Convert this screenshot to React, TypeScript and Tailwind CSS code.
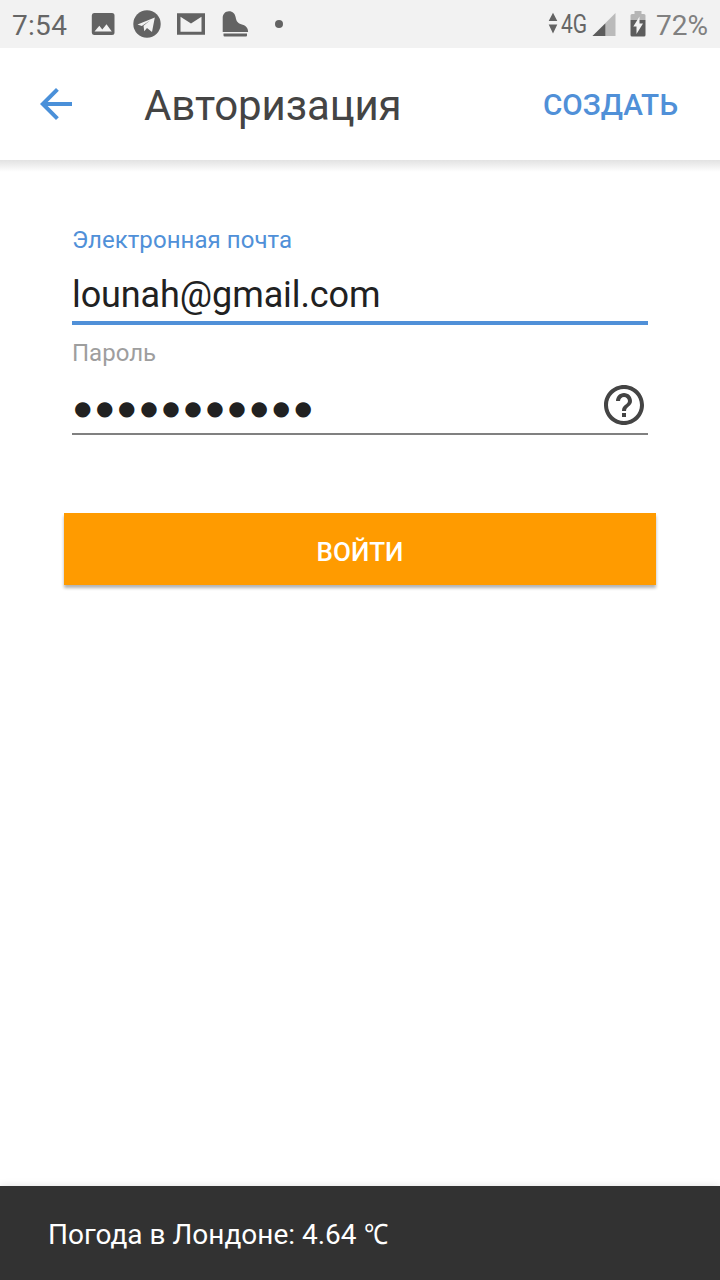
import React from "react";

function StatusBar() {
  return (
    <div className="flex h-12 shrink-0 items-center bg-[#f2f2f2] text-[#666666]">
      <span className="ml-3 mt-[3px] w-[79px] text-[28px] leading-8 tracking-[0.3px]">7:54</span>
      <svg className="h-6 w-6 shrink-0" viewBox="0 0 24 24" fill="#636363">
        <path fillRule="evenodd" d="M3 1h18a2.500 2.500 0 0 1 2.500 2.500v17a2.500 2.500 0 0 1-2.500 2.500H3A2.500 2.500 0 0 1 .8 20.500v-17A2.500 2.500 0 0 1 3 1ZM3.500 19.500h17.300L15.500 12.200l-4.200 5.300-3-3.700Z" />
      </svg>
      <svg className="ml-[18px] h-7 w-7 shrink-0" viewBox="0 0 28 28">
        <circle cx="14" cy="14" r="13.700" fill="#636363" />
        <path fill="#f2f2f2" d="M4.500 14.500 21.800 7.500 19 22l-5-3.900-2.700 3.100-.8-5.400 6.800-5.600-8.500 5.700Z" />
      </svg>
      <svg className="ml-4 h-6 w-7 shrink-0" viewBox="0 0 28 24">
        <path fill="#636363" fillRule="evenodd" d="M0 1.300h28v21.500H0ZM3.500 4.800v15h21v-15L14 11.500Z" />
      </svg>
      <svg className="ml-4 h-7 w-8 shrink-0" viewBox="0 0 32 28" fill="#636363">
        <path d="M1.700 22V8C1.700 4 4.200 1.200 8 1.200s6 2.500 6.600 5.900c.7 4.400 2.100 6.200 5.500 7.100 4.600 1.200 7 3.300 7 7.800Z" />
        <path d="M2.500 23.400h23.500v2.200a1 1 0 0 1-1 1h-21.500a1 1 0 0 1-1-1Z" />
      </svg>
      <span className="ml-[22px] h-2 w-2 rounded-full bg-[#636363]" />
      <svg className="-mt-[3px] ml-[265px] h-[22px] w-[10px] shrink-0" viewBox="0 0 10 22" fill="#636363">
        <path d="M5 .8 9.300 9H.7ZM.7 12.500h8.600L5 21.500Z" />
      </svg>
      <span className="ml-[3px] mt-[2px] w-[31px] origin-left scale-x-[0.84] text-[25px] leading-8 whitespace-nowrap">4G</span>
      <svg className="h-6 w-6 shrink-0" viewBox="0 0 24 24">
        <path fill="#bababa" d="M23.500 1v23H.5Z" />
        <path fill="#5c5c5c" d="M13.300 11.400v12.600H.5Z" />
      </svg>
      <svg className="ml-[14px] h-7 w-4 shrink-0" viewBox="0 0 16 28">
        <path fill="#b5b5b5" d="M4.500 1h7v3H14a1.500 1.500 0 0 1 1.500 1.500V10H.5V5.500A1.500 1.500 0 0 1 2 4h2.500Z" />
        <path fill="#5c5c5c" d="M.5 10h15v15a1.500 1.500 0 0 1-1.500 1.500H2A1.500 1.500 0 0 1 .5 25Z" />
        <path fill="#f2f2f2" d="M9.500 6.500v7H13L6.500 24v-7.500H3.300Z" />
      </svg>
      <span className="ml-[10px] mt-[3px] text-[28px] leading-8 text-[#808080]">72%</span>
    </div>
  );
}

function Header() {
  return (
    <header className="flex h-28 shrink-0 items-center bg-white">
      <svg className="ml-8 h-12 w-12 shrink-0" viewBox="0 0 24 24" fill="#4a90d9">
        <path d="M20 11H7.830l5.590-5.590L12 4l-8 8 8 8 1.410-1.410L7.830 13H20v-2z" />
      </svg>
      <h1 className="ml-16 mt-[3px] flex-1 text-[42px] leading-[48px] tracking-[-0.1px] text-[#444444]">Авторизация</h1>
      <button className="mr-[42px] mt-[1px] text-[29.700px] leading-8 font-medium text-[#5090d8]">СОЗДАТЬ</button>
    </header>
  );
}

export default function App() {
  return (
    <div className="flex h-[1280px] w-[720px] flex-col overflow-hidden bg-white font-['Roboto',sans-serif]">
      <StatusBar />
      <Header />
      <div className="h-3 shrink-0 bg-linear-to-b from-[#e2e2e2] to-white" />
      <main className="flex flex-1 flex-col px-16 pt-[52px]">
        <div className="flex flex-col px-2">
          <label className="text-[24px] leading-8 tracking-[0.06px] text-[#5090d8]">Электронная почта</label>
          <div className="mt-4 flex h-[53px] items-center border-b-4 border-[#5090d8] pb-[2px] text-[36px] leading-[47px] tracking-[-0.1px] text-[#212121]">
            lounah@gmail.com
          </div>
          <label className="mt-3 text-[24px] leading-8 text-[#9e9e9e]">Пароль</label>
          <div className="flex h-[66px] items-center justify-between border-b-2 border-[#808080]">
            <span className="ml-[2px] mt-[13px] font-['DejaVu_Sans',sans-serif] text-[20px] leading-8 tracking-[4.600px] text-[#212121]">●●●●●●●●●●●</span>
            <svg className="mt-[7px] h-12 w-12" viewBox="0 0 24 24" fill="#444444">
              <path d="M11 18h2v-2h-2v2zm1-16C6.480 2 2 6.480 2 12s4.480 10 10 10 10-4.480 10-10S17.520 2 12 2zm0 18c-4.410 0-8-3.590-8-8s3.590-8 8-8 8 3.590 8 8-3.590 8-8 8zm0-14c-2.210 0-4 1.790-4 4h2c0-1.100.9-2 2-2s2 .9 2 2c0 2-3 1.750-3 5h2c0-2.250 3-2.500 3-5 0-2.210-1.790-4-4-4z" />
            </svg>
          </div>
        </div>
        <button className="mt-[78px] h-[72px] bg-[#ff9b00] pt-[5px] text-[26px] leading-8 font-medium text-white shadow-[0_3px_3px_rgba(0,0,0,0.3)]">
          ВОЙТИ
        </button>
      </main>
      <footer className="flex h-[94px] shrink-0 items-center bg-[#323232] pl-12 text-[28px] leading-8 text-white shadow-[0_0_8px_rgba(0,0,0,0.12)]">
        <p className="mt-[3px]">Погода в Лондоне: 4.64 <span className="inline-block origin-left scale-x-[0.87]">℃</span></p>
      </footer>
    </div>
  );
}
